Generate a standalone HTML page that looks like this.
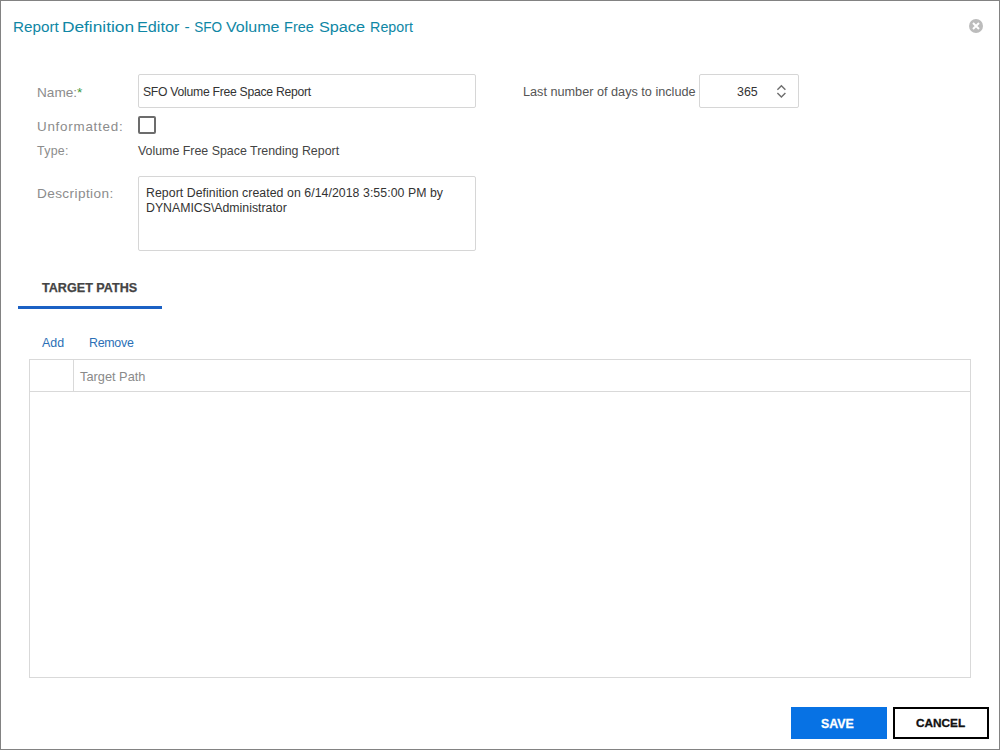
<!DOCTYPE html>
<html>
<head>
<meta charset="utf-8">
<style>
html,body{margin:0;padding:0;background:#fff;}
body{width:1000px;height:750px;position:relative;overflow:hidden;font-family:"Liberation Sans",sans-serif;}
.frame{position:absolute;left:0;top:0;width:998px;height:748px;border:1px solid #828282;}
.t{position:absolute;white-space:nowrap;line-height:1;}
.box{position:absolute;box-sizing:border-box;border:1px solid #d6d6d6;border-radius:2px;background:#fff;}
</style>
</head>
<body>
<div class="frame"></div>

<!-- title -->
<div id="title" style="position:absolute;left:0;top:19px;font-size:15.6px;color:#0f87a5;line-height:1;white-space:nowrap;"><span id="tw0" style="position:absolute;left:13.0px;top:0;transform:scale(0.978,0.92);transform-origin:1px 14px">Report</span><span id="tw1" style="position:absolute;left:62.0px;top:0;transform:scale(1.111,0.92);transform-origin:1px 14px">Definition</span><span id="tw2" style="position:absolute;left:137.0px;top:0;transform:scale(1.040,0.92);transform-origin:1px 14px">Editor</span><span id="tw3" style="position:absolute;left:184.6px;top:0;transform:scale(1.000,0.92);transform-origin:1px 14px">-</span><span id="tw4" style="position:absolute;left:194.0px;top:0;transform:scale(0.871,0.92);transform-origin:1px 14px">SFO</span><span id="tw5" style="position:absolute;left:226.3px;top:0;transform:scale(1.027,0.92);transform-origin:1px 14px">Volume</span><span id="tw6" style="position:absolute;left:284.4px;top:0;transform:scale(0.929,0.92);transform-origin:1px 14px">Free</span><span id="tw7" style="position:absolute;left:319.0px;top:0;transform:scale(1.042,0.92);transform-origin:1px 14px">Space</span><span id="tw8" style="position:absolute;left:369.5px;top:0;transform:scale(0.915,0.92);transform-origin:1px 14px">Report</span></div>

<!-- close icon -->
<svg style="position:absolute;left:966px;top:16px" width="20" height="20" viewBox="0 0 20 20">
  <circle cx="10" cy="10" r="7" fill="#bcbcbc"/>
  <path d="M7 7 L13 13 M13 7 L7 13" stroke="#fff" stroke-width="2" stroke-linecap="butt"/>
</svg>

<!-- labels -->
<div class="t" id="lname" style="left:37px;top:86px;font-size:13.6px;color:#8c8c8c;">Name:<span style="color:#3a9a3a">*</span></div>
<div class="t" id="lunf" style="left:37px;top:120px;font-size:13.4px;letter-spacing:0.75px;color:#8c8c8c;">Unformatted:</div>
<div class="t" id="ltype" style="left:37px;top:145px;font-size:12.4px;letter-spacing:0.3px;color:#8c8c8c;">Type:</div>
<div class="t" id="ldesc" style="left:37px;top:187px;font-size:13.6px;letter-spacing:0.4px;color:#8c8c8c;">Description:</div>

<!-- name input -->
<div class="box" style="left:138px;top:74px;width:338px;height:34px;"></div>
<div class="t" id="vname" style="left:143px;top:86px;font-size:12.2px;letter-spacing:-0.27px;color:#333;">SFO Volume Free Space Report</div>

<!-- checkbox -->
<div style="position:absolute;left:138px;top:116px;width:18px;height:18px;box-sizing:border-box;border:2px solid #6c6c6c;border-radius:2px;"></div>

<!-- type value -->
<div class="t" id="vtype" style="left:138px;top:145px;font-size:12.4px;color:#444;">Volume Free Space Trending Report</div>

<!-- description -->
<div class="box" style="left:138px;top:176px;width:338px;height:75px;"></div>
<div class="t" id="vdesc1" style="left:146px;top:187px;font-size:12.3px;letter-spacing:0.06px;color:#333;">Report Definition created on 6/14/2018 3:55:00 PM by</div>
<div class="t" id="vdesc2" style="left:146px;top:202px;font-size:12.3px;color:#333;">DYNAMICS\Administrator</div>

<!-- last number of days -->
<div class="t" id="ldays" style="left:523px;top:86px;font-size:12.68px;color:#555;">Last number of days to include</div>
<div class="box" style="left:699px;top:74px;width:100px;height:34px;"></div>
<div class="t" id="vdays" style="left:737px;top:86px;font-size:12.4px;color:#333;">365</div>
<svg style="position:absolute;left:774px;top:83px" width="16" height="17" viewBox="0 0 16 17">
  <path d="M3.4 6.8 L7.4 2.8 L11.4 6.8 M3.4 10 L7.4 14 L11.4 10" fill="none" stroke="#6e6e6e" stroke-width="1.4"/>
</svg>

<!-- tab -->
<div class="t" id="tab" style="left:42px;top:282px;font-size:12.6px;font-weight:bold;color:#444;-webkit-text-stroke:0.25px #444;">TARGET PATHS</div>
<div style="position:absolute;left:18px;top:306px;width:144px;height:3px;background:#1b61c4;"></div>

<!-- actions -->
<div class="t" id="add" style="left:42px;top:337px;font-size:12.4px;color:#2b6fb6;">Add</div>
<div class="t" id="remove" style="left:89px;top:337px;font-size:12.4px;letter-spacing:-0.27px;color:#2b6fb6;">Remove</div>

<!-- grid -->
<div style="position:absolute;left:29px;top:359px;width:942px;height:319px;box-sizing:border-box;border:1px solid #d9d9d9;"></div>
<div style="position:absolute;left:29px;top:391px;width:942px;height:1px;background:#d9d9d9;"></div>
<div style="position:absolute;left:73px;top:359px;width:1px;height:33px;background:#d9d9d9;"></div>
<div class="t" id="thpath" style="left:80px;top:371px;font-size:12.8px;color:#8a8a8a;">Target Path</div>

<!-- buttons -->
<div style="position:absolute;left:791px;top:707px;width:96px;height:32px;background:#0772e4;"></div>
<div class="t" id="save" style="left:821px;top:718px;font-size:12.4px;font-weight:bold;color:#fff;-webkit-text-stroke:0.3px #fff;">SAVE</div>
<div style="position:absolute;left:893px;top:707px;width:96px;height:32px;box-sizing:border-box;border:2px solid #000;"></div>
<div class="t" id="cancel" style="left:916px;top:718px;font-size:11.8px;font-weight:bold;color:#111;-webkit-text-stroke:0.3px #111;">CANCEL</div>

</body>
</html>
